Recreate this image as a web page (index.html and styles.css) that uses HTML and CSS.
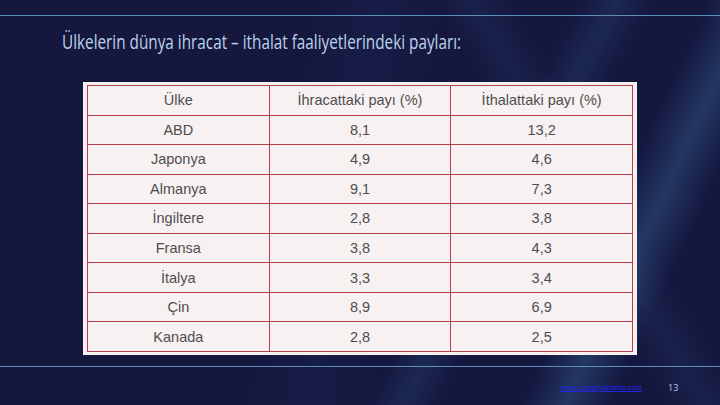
FILE: index.html
```html
<!DOCTYPE html>
<html lang="tr">
<head>
<meta charset="utf-8">
<link rel="stylesheet" href="styles.css">
</head>
<body>
<div class="slide">
  <div class="streaks"></div>
  <div class="rule top"></div>
  <h1 class="title">Ülkelerin dünya ihracat – ithalat faaliyetlerindeki payları:</h1>
  <div class="figure">
    <table class="data">
      <tr><th>Ülke</th><th>İhracattaki payı (%)</th><th>İthalattaki payı (%)</th></tr>
      <tr><td>ABD</td><td>8,1</td><td>13,2</td></tr>
      <tr><td>Japonya</td><td>4,9</td><td>4,6</td></tr>
      <tr><td>Almanya</td><td>9,1</td><td>7,3</td></tr>
      <tr><td>İngiltere</td><td>2,8</td><td>3,8</td></tr>
      <tr><td>Fransa</td><td>3,8</td><td>4,3</td></tr>
      <tr><td>İtalya</td><td>3,3</td><td>3,4</td></tr>
      <tr><td>Çin</td><td>8,9</td><td>6,9</td></tr>
      <tr><td>Kanada</td><td>2,8</td><td>2,5</td></tr>
    </table>
  </div>
  <div class="rule bottom"></div>
  <div class="footer">
    <a class="link" href="#">www.cografyaharita.com</a>
    <span class="page">13</span>
  </div>
</div>
</body>
</html>
```
FILE: styles.css
```css
html, body {
  margin: 0;
  padding: 0;
}
body {
  width: 720px;
  height: 405px;
  overflow: hidden;
  background: #15173f;
}
.slide {
  position: relative;
  width: 720px;
  height: 405px;
  display: flex;
  flex-direction: column;
  background: #15173f;
  overflow: hidden;
}
.streaks {
  position: absolute;
  inset: 0;
  background:
    linear-gradient(118deg, transparent 62%, rgba(60,120,170,0.18) 66%, transparent 70%),
    linear-gradient(115deg, transparent 78%, rgba(70,140,190,0.28) 83%, transparent 88%),
    linear-gradient(60deg, transparent 70%, rgba(60,110,160,0.12) 74%, transparent 78%),
    linear-gradient(100deg, transparent 40%, rgba(40,80,140,0.10) 48%, transparent 56%);
  pointer-events: none;
}
.rule {
  position: relative;
  height: 1px;
  background: #5b8fb8;
  flex: none;
}
.rule.top {
  margin-top: 15px;
}
.title {
  position: relative;
  margin: 12px 0 0 62px;
  font-family: "Open Sans", "Liberation Sans", sans-serif;
  font-weight: 400;
  font-size: 20px;
  line-height: 28px;
  color: #bcd2e8;
  white-space: nowrap;
  transform: scaleX(0.765);
  transform-origin: left center;
}
.figure {
  position: relative;
  margin: 26px 0 0 83px;
  width: 554px;
  height: 273px;
  box-sizing: border-box;
  padding: 3px 4px 0 4px;
  background: #f7f1f1;
  flex: none;
}
.data {
  width: 546px;
  height: 267px;
  border-collapse: collapse;
  table-layout: fixed;
  font-family: "Liberation Sans", Arial, sans-serif;
  font-size: 14.5px;
  color: #4e4e4e;
}
.data th, .data td {
  border: 1.5px solid #b8404c;
  text-align: center;
  font-weight: 400;
  padding: 0;
}
.rule.bottom {
  margin-top: 11px;
}
.footer {
  position: relative;
  display: flex;
  align-items: center;
  margin-top: 14px;
  padding-left: 560px;
}
.link {
  width: 92px;
  font-family: "Liberation Sans", Arial, sans-serif;
  font-size: 7.5px;
  color: #2424e6;
  text-decoration: underline;
  white-space: nowrap;
  overflow: hidden;
}
.page {
  margin-left: 16px;
  font-family: "Open Sans", sans-serif;
  font-size: 9px;
  color: #b9cfe6;
}
```
